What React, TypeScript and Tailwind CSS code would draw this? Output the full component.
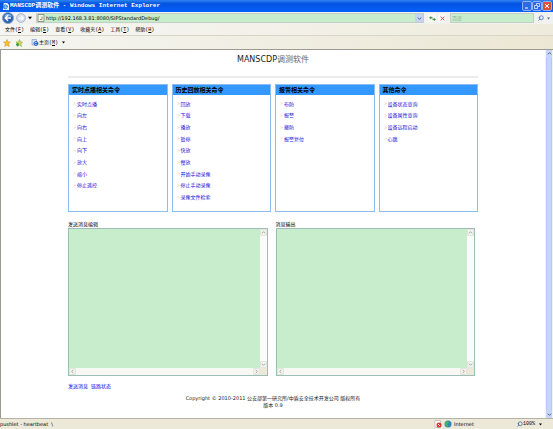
import React from "react";
import { Search } from "lucide-react";

const cjk = "font-['Liberation_Sans','Noto_Sans_CJK_SC',sans-serif]";
const mono = "font-['Liberation_Mono','Noto_Sans_CJK_SC',monospace]";
const ui = "font-['DejaVu_Sans_Condensed','Noto_Sans_CJK_SC',sans-serif]";
const wide = "font-['DejaVu_Sans','Noto_Sans_CJK_SC',sans-serif]";

const menus = [
  ["文件", "F"],
  ["编辑", "E"],
  ["查看", "V"],
  ["收藏夹", "A"],
  ["工具", "T"],
  ["帮助", "H"],
];

const panels = [
  { title: "实时点播相关命令", items: ["实时点播", "向左", "向右", "向上", "向下", "放大", "缩小", "停止遥控"] },
  {
    title: "历史回放相关命令",
    items: ["回放", "下载", "播放", "暂停", "快放", "慢放", "开始手动录像", "停止手动录像", "录像文件检索"],
  },
  { title: "报警相关命令", items: ["布防", "报警", "撤防", "报警复位"] },
  { title: "其他命令", items: ["设备状态查询", "设备属性查询", "设备远程启动", "心跳"] },
];

function Chevron({ className, d }: { className: string; d: string }) {
  return (
    <svg viewBox="0 0 6 6" className={className} fill="none" stroke="currentColor" strokeWidth="1.2">
      <path d={d} />
    </svg>
  );
}
const UP = "M1 4 3 2 5 4";
const DOWN = "M1 2 3 4 5 2";
const LEFT = "M4 1 2 3 4 5";
const RIGHT = "M2 1 4 3 2 5";

function WindowButton({ label, red, children }: { label: string; red?: boolean; children: React.ReactNode }) {
  return (
    <button
      aria-label={label}
      className={`flex size-2 items-center justify-center rounded-[1px] outline outline-[#8fb2f4] ${red ? "bg-[#dc5232]" : "bg-[#2f68e4]"}`}
    >
      <svg viewBox="0 0 8 8" className="size-2" fill="none" stroke="white">
        {children}
      </svg>
    </button>
  );
}

function ScrollButton({ label, d }: { label: string; d: string }) {
  return (
    <button
      aria-label={label}
      className="flex size-[7px] items-center justify-center rounded-[1px] border border-[#e4e4dc] bg-[#f3f3ee] text-[#aaaaa2]"
    >
      <Chevron className="size-[5px]" d={d} />
    </button>
  );
}

function MessageBox({ id, label }: { id: string; label: string }) {
  return (
    <div>
      <label htmlFor={id} className="block h-2 text-[5px] leading-2 text-black">
        {label}
      </label>
      <div className="grid h-[148px] grid-cols-[1fr_7px] grid-rows-[1fr_7px] border border-[#9dbdb6]">
        <textarea id={id} className="block size-full resize-none overflow-hidden bg-[#c7edcc] p-px text-[5px] outline-none" />
        <div className="flex flex-col justify-between bg-[#fbfbf9]">
          <ScrollButton label="向上滚动" d={UP} />
          <ScrollButton label="向下滚动" d={DOWN} />
        </div>
        <div className="flex justify-between bg-[#f7f7f3]">
          <ScrollButton label="向左滚动" d={LEFT} />
          <ScrollButton label="向右滚动" d={RIGHT} />
        </div>
        <div className="bg-[#ece9d8]" />
      </div>
    </div>
  );
}

export default function App() {
  return (
    <div className={`flex h-screen flex-col overflow-hidden bg-white text-[5px] leading-2 text-black ${cjk}`}>
      <header className="shrink-0">
        <div className="flex h-3 items-center justify-between bg-linear-to-b from-[#2f83f2] via-[#0453e0] via-30% to-[#0561fb] px-[2px] text-white">
          <div className="flex items-center gap-px">
            <svg viewBox="0 0 8 8" className="size-[7px]">
              <path d="M2 0h4l2 2v6H1z" fill="#e8f1ff" />
              <path d="M2 4.5h4.2A2.2 2.2 0 1 0 5.6 6" fill="none" stroke="#1684d8" strokeWidth="1.2" />
            </svg>
            <span className={`whitespace-nowrap text-[6px] font-bold ${mono}`}>
              MANSCDP调测软件 - Windows Internet Explorer
            </span>
          </div>
          <div className="flex gap-[2px]">
            <WindowButton label="最小化">
              <path d="M2 6h3" />
            </WindowButton>
            <WindowButton label="还原">
              <path d="M3.5 3V1.5h3v3H5M1.5 3.5h3v3h-3z" strokeWidth=".7" />
            </WindowButton>
            <WindowButton label="关闭" red>
              <path d="m2 2 4 4M6 2 2 6" />
            </WindowButton>
          </div>
        </div>

        <div className="flex h-3 items-center gap-1 bg-[#f1f2ee] pl-[2px] pr-[3px]">
          <div className="flex items-center gap-[2px]">
            <button aria-label="后退">
              <svg viewBox="0 0 12 12" className="size-3">
                <circle cx="6" cy="6" r="5.5" fill="#2c5fae" stroke="#8ba3c6" />
                <path d="M2 4.5a4.3 4.3 0 0 1 8 0z" fill="#7fb0e8" />
                <path d="M9 6H3.5M6 3.2 3.2 6 6 8.800" fill="none" stroke="white" strokeWidth="1.5" />
              </svg>
            </button>
            <button aria-label="前进">
              <svg viewBox="0 0 12 12" className="size-[10px]">
                <circle cx="6" cy="6" r="5.3" fill="#d3deec" stroke="#a3b0c4" />
                <path d="M3 6h5.5M6 3.2 8.8 6 6 8.800" fill="none" stroke="white" strokeWidth="1.5" />
              </svg>
            </button>
            <button aria-label="最近的页面">
              <svg viewBox="0 0 6 6" className="size-1">
                <path d="M0 1h6L3 5z" />
              </svg>
            </button>
          </div>
          <div className="flex h-[10px] flex-1 items-center gap-px border border-[#c3cfc4] bg-[#c7edcc]">
            <svg viewBox="0 0 8 8" className="size-2">
              <path d="M1 .5h6v7H1z" fill="#f4f4ec" stroke="#8d9a86" />
              <path d="M3 5.5h2V2.5" fill="none" stroke="#b08a6a" />
            </svg>
            <input
              aria-label="地址"
              defaultValue="http://192.168.3.81:8080/SIPStandardDebug/"
              className={`h-2 min-w-0 flex-1 bg-transparent text-[5px] outline-none ${wide}`}
            />
            <button aria-label="显示地址列表" className="flex size-2 items-center justify-center bg-[#c4d3f6] text-[#42618f]">
              <Chevron className="size-[5px]" d={DOWN} />
            </button>
          </div>
          <div className="flex gap-[2px]">
            <button aria-label="刷新" className="flex size-2 items-center justify-center bg-[#f8f8f5]">
              <svg viewBox="0 0 8 8" className="size-[7px]" fill="#3f9a45">
                <path d="M0 3 2.500 1v1.300H4v1.400H2.500V5zM8 5 5.500 3v1.300H4v1.400h1.500V7z" />
              </svg>
            </button>
            <button aria-label="停止" className="flex size-2 items-center justify-center bg-[#f8f8f5]">
              <svg viewBox="0 0 8 8" className="size-[5px]" stroke="#c8383f" strokeWidth="1.4">
                <path d="m1 1 6 6M7 1 1 7" />
              </svg>
            </button>
          </div>
          <input
            aria-label="搜索"
            placeholder="百度"
            className="h-[10px] w-[84px] border border-[#c3cfc4] bg-[#c7edcc] px-px text-[5px] outline-none placeholder:text-[#8fae96]"
          />
          <button aria-label="开始搜索" className="flex w-3 items-center justify-between text-[#3a64b4]">
            <Search className="size-[6px] -scale-x-100" strokeWidth={3} />
            <svg viewBox="0 0 6 6" className="size-[3px]" fill="currentColor">
              <path d="M0 1h6L3 5z" />
            </svg>
          </button>
        </div>

        <nav className={`flex h-3 items-center gap-[6px] border-b border-[#d8d5c8] bg-linear-to-r from-[#f6f6f4] to-[#efebdc] pl-[5px] ${mono}`}>
          {menus.map(([name, key]) => (
            <button key={name} className="whitespace-nowrap">
              {name}(<span className="underline">{key}</span>)
            </button>
          ))}
        </nav>

        <div className={`flex h-[14px] items-center border-b border-[#9c9a90] bg-linear-to-r from-[#f5f5f1] to-[#ece7d4] pl-[3px] ${mono}`}>
          <button aria-label="收藏中心" className="mr-1">
            <svg viewBox="0 0 16 16" className="size-2">
              <path d="m8 1 2 5h5l-4 3.500 1.500 5.500L8 12l-4.500 3L5 9.500 1 6h5z" fill="#fdc02f" stroke="#cf8a12" />
            </svg>
          </button>
          <button aria-label="添加到收藏夹" className="mr-2">
            <svg viewBox="0 0 16 16" className="size-2">
              <path d="m9 1 2 5h4l-3 3.500 1 5.500-4-3-4.500 3L6 9.500 2 6h5z" fill="#d9d75e" stroke="#7fa02d" />
              <path d="M5 8v6M2 11h6" stroke="#37a13c" strokeWidth="3" />
            </svg>
          </button>
          <button className="flex items-center">
            <svg viewBox="0 0 16 16" className="size-2">
              <path d="M2 1h9v11H2z" fill="#d6e4fa" stroke="#6180b8" />
              <circle cx="10" cy="9" r="4" fill="none" stroke="#2667bd" strokeWidth="2" />
              <path d="M7 9h7" stroke="#2667bd" strokeWidth="2" />
            </svg>
            <span>
              主页(<span className="underline">M</span>)
            </span>
            <svg viewBox="0 0 6 6" className="ml-1 size-[3px]">
              <path d="M0 1h6L3 5z" />
            </svg>
          </button>
        </div>
      </header>

      <div className="flex min-h-0 flex-1 border-l border-[#9c9a90]">
        <main className="min-w-0 flex-1 overflow-hidden">
          <div className="mx-auto max-w-[410px]">
            <h1 className={`pt-1 text-center text-[8px] leading-3 text-[#222] ${wide}`}>
              MANSCDP<span className="text-[#666]">调测软件</span>
            </h1>
            <hr className="mt-[10px] border-t-2 border-[#ececec]" />
            <div className="mt-[6px] grid grid-cols-4 gap-1">
              {panels.map((panel) => (
                <section key={panel.title} className="h-32 border border-[#8dbdf0]">
                  <h2 className="h-[10px] bg-[#3399ff] pl-[3px] text-[6px] leading-[10px] font-bold">{panel.title}</h2>
                  <ul className="mt-[3px] grid h-[105px] grid-rows-9 pl-1 text-[#1a0dd6]">
                    {panel.items.map((item) => (
                      <li key={item} className="flex items-center gap-px">
                        <Chevron className="size-[3px] text-[#e0a060]" d={RIGHT} />
                        <a href="#">{item}</a>
                      </li>
                    ))}
                  </ul>
                </section>
              ))}
            </div>
            <div className="mt-2 grid grid-cols-2 gap-2 pr-[3px]">
              <MessageBox id="edit" label="发送消息编辑" />
              <MessageBox id="output" label="消息输出" />
            </div>
            <div className="mt-[6px] flex gap-[3px] text-[#0000ee]">
              <a href="#">发送消息</a>
              <a href="#">链路状态</a>
            </div>
            <footer className={`mt-[5px] text-center leading-[7px] text-[#222] ${wide}`}>
              <p>Copyright © 2010-2011 公安部第一研究所/中盾安全技术开发公司 版权所有</p>
              <p>版本 0.9</p>
            </footer>
          </div>
        </main>
        <div className="flex w-2 flex-col justify-between bg-[#f3f3ee] px-px text-[#4a6390]">
          <button aria-label="页面向上" className="flex h-[7px] items-center justify-center bg-[#c6d5fb]">
            <Chevron className="size-[5px]" d={UP} />
          </button>
          <div className="flex-1 rounded-[1px] border-x border-[#b4c8f6] bg-[#c6d5fb]" />
          <button aria-label="页面向下" className="flex h-[7px] items-center justify-center bg-[#c6d5fb]">
            <Chevron className="size-[5px]" d={DOWN} />
          </button>
        </div>
      </div>

      <div className={`flex h-[11px] shrink-0 items-center border-t border-[#b5b2a4] bg-[#ece9d8] ${wide}`}>
        <span className="flex-1 whitespace-pre">pushlet - heartbeat  \</span>
        <div className="flex w-[83px] items-center gap-[2px]">
          <svg viewBox="0 0 16 16" className="size-2">
            <path d="M2 1h11v14H2z" fill="#fff" stroke="#999" />
            <circle cx="10" cy="10" r="5" fill="#d93636" />
            <path d="m8 8 4 4" stroke="#fff" strokeWidth="2" />
          </svg>
          <svg viewBox="0 0 16 16" className="size-2">
            <circle cx="8" cy="8" r="7" fill="#3187b8" />
            <path d="M3 4 8 2l2 4-4 2 3 4-3 2-4-5z" fill="#4fb35a" />
          </svg>
          <span>Internet</span>
        </div>
        <button className={`flex w-[36px] items-center ${mono}`}>
          <Search className="size-[6px] -scale-x-100 text-[#3a64b4]" strokeWidth={3} />
          <span>100%</span>
          <svg viewBox="0 0 6 6" className="ml-1 size-[3px]">
            <path d="M0 1h6L3 5z" />
          </svg>
        </button>
      </div>
    </div>
  );
}
